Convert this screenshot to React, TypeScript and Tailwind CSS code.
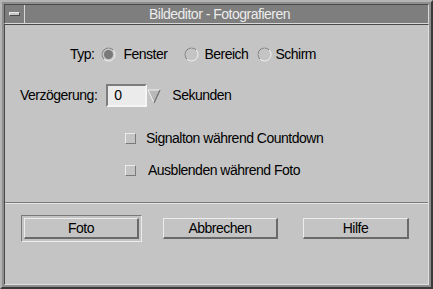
export default function App() {
  const font = { fontFamily: '"Liberation Sans", Arial, sans-serif' };

  return (
    <div
      className="w-[433px] h-[289px] bg-[#8e8e8e] border-t-2 border-l-2 border-[#b4b4b4] border-r-[2px] border-b-[2px] border-r-[#3a3a3a] border-b-[#3a3a3a] p-[2px] flex flex-col"
      style={font}
    >
      {/* title bar */}
      <div className="flex h-[20px] border-t border-l border-[#4a4a4a] border-b border-r border-b-[#d8d8d8] border-r-[#d8d8d8] bg-[#7e7e7e]">
        <div className="w-[20px] h-full flex items-center justify-center border-r border-[#d8d8d8]">
          <div className="w-[11px] h-[4px] bg-[#c8c8c8] border-t border-l border-[#e8e8e8] border-b border-r border-b-[#4a4a4a] border-r-[#4a4a4a]" />
        </div>
        <div className="flex-1 flex items-center justify-center text-[14px] tracking-[-0.5px] text-[#ececec] leading-none pb-[1px] pr-[14px]">
          Bildeditor - Fotografieren
        </div>
      </div>

      {/* body */}
      <div className="flex-1 bg-[#c4c4c4] border-l border-t border-[#4a4a4a] border-r border-b border-r-[#e0e0e0] border-b-[#e0e0e0] flex flex-col text-[14px] tracking-[-0.5px] text-black">
        {/* Typ */}
        <div className="flex items-center h-[20px] mt-[19px] pl-[65px]">
          <span>Typ:</span>
          <Radio checked className="ml-[7px]" />
          <span className="ml-[7px]">Fenster</span>
          <Radio className="ml-[17px]" />
          <span className="ml-[5px]">Bereich</span>
          <Radio className="ml-[9px]" />
          <span className="ml-[3px]">Schirm</span>
        </div>

        {/* Verzoegerung */}
        <div className="flex items-center h-[23px] mt-[20px] pl-[15px]">
          <span>Verzögerung:</span>
          <div className="ml-[9px] flex items-stretch h-[23px]">
            <div className="w-[41px] bg-[#ebebeb] border-t-2 border-l-2 border-[#7c7c7c] border-b-2 border-r-2 border-b-[#f4f4f4] border-r-[#f4f4f4] flex items-center pl-[6px]">
              0
            </div>
            <div className="w-[14px] flex items-center justify-center">
              <svg width="14" height="16" viewBox="0 0 14 16">
                <polygon points="1,2 13,2 7,15" fill="#b8b8b8" />
                <polyline points="7,15 1,2 13,2" fill="none" stroke="#f2f2f2" strokeWidth="1" />
                <line x1="13" y1="2" x2="7" y2="15" stroke="#6e6e6e" strokeWidth="1.2" />
              </svg>
            </div>
          </div>
          <span className="ml-[11px]">Sekunden</span>
        </div>

        {/* checkboxes */}
        <div className="flex items-center h-[16px] mt-[23px] pl-[120px]">
          <Check />
          <span className="ml-[10px]">Signalton während Countdown</span>
        </div>
        <div className="flex items-center h-[16px] mt-[16px] pl-[120px]">
          <Check />
          <span className="ml-[12px]">Ausblenden während Foto</span>
        </div>

        {/* separator */}
        <div className="mt-[24px] h-[2px] border-t border-[#7a7a7a] border-b border-b-[#e4e4e4]" />

        {/* buttons */}
        <div className="flex items-center mt-[11px] pl-[16px]">
          <div className="border border-[#7a7a7a] border-b-[#ececec] border-r-[#ececec] p-[2px]">
            <Button label="Foto" w="w-[115px]" />
          </div>
          <div className="ml-[21px]">
            <Button label="Abbrechen" w="w-[115px]" />
          </div>
          <div className="ml-[25px]">
            <Button label="Hilfe" w="w-[106px]" />
          </div>
        </div>
      </div>
    </div>
  );
}

function Radio({ checked, className }: { checked?: boolean; className?: string }) {
  return (
    <svg width="15" height="15" viewBox="0 0 15 15" className={className}>
      <circle cx="7.5" cy="7.5" r="6.5" fill="none" stroke="#f0f0f0" strokeWidth="1" />
      <path d="M2.9 12.1 A6.5 6.5 0 0 1 12.1 2.9" fill="none" stroke="#7a7a7a" strokeWidth="1" />
      {checked && <circle cx="7.5" cy="7.5" r="4.5" fill="#7a7a7a" />}
    </svg>
  );
}

function Check() {
  return (
    <div className="w-[11px] h-[11px] bg-[#c4c4c4] border-t border-l border-[#ececec] border-b border-r border-b-[#7a7a7a] border-r-[#7a7a7a]" />
  );
}

function Button({ label, w }: { label: string; w: string }) {
  return (
    <div
      className={`${w} h-[21px] flex items-center justify-center border-t border-l border-[#ececec] border-b-2 border-r-2 border-b-[#6a6a6a] border-r-[#6a6a6a]`}
    >
      {label}
    </div>
  );
}
